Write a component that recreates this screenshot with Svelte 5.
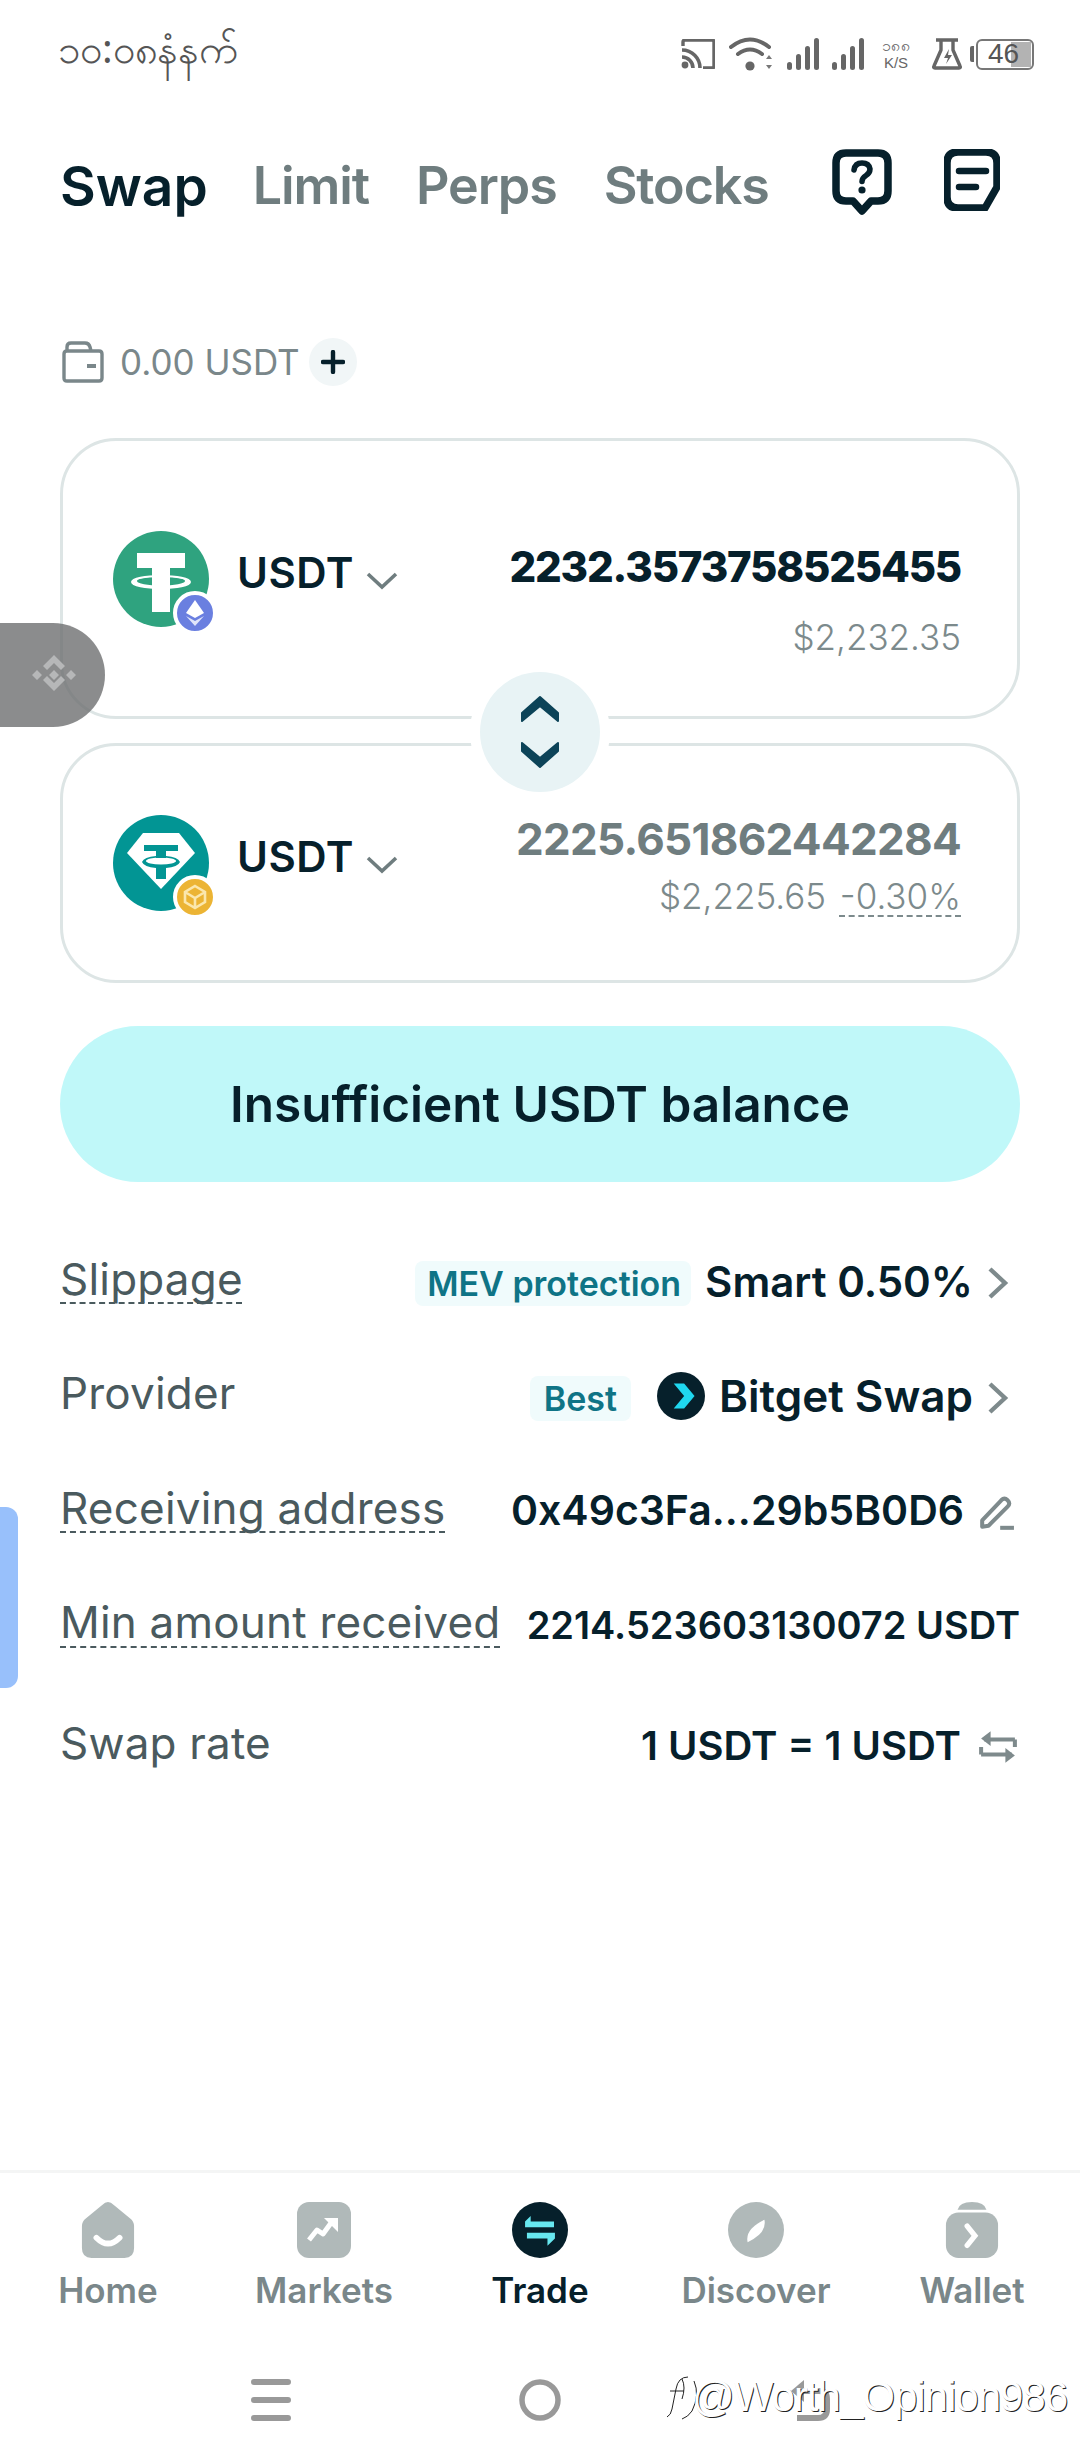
<script>
  const tabs = ['Limit', 'Perps', 'Stocks'];
  const nav = ['Home', 'Markets', 'Trade', 'Discover', 'Wallet'];
</script>

<div class="page">
  <div class="status">
    <span class="time">၁၀:၀၈နံနက်</span>
    <div class="sicons">
      <svg width="34" height="30" viewBox="0 0 34 30" class="cast"><path d="M2 7V3q0-2 2-2h27q2 0 2 2v24q0 2-2 2H22" fill="none" stroke="#666" stroke-width="3.4"/><circle cx="4" cy="26" r="3.4" fill="#666"/><path d="M1 18a11 11 0 0 1 11 11M1 11a18 18 0 0 1 18 18" fill="none" stroke="#666" stroke-width="3.6"/></svg>
      <svg width="44" height="34" viewBox="0 0 44 34" class="wifi"><path d="M2 10q19-15 38 0M9 17q12-9 24 0" fill="none" stroke="#666" stroke-width="4" stroke-linecap="round"/><circle cx="21" cy="29" r="4.6" fill="#666"/><path d="M37 22l3-4 3 4zM37 28l3 4 3-4z" fill="#777"/></svg>
      <svg width="32" height="32" viewBox="0 0 32 32" class="sig"><rect x="0" y="24" width="5" height="8" rx="2.5"/><rect x="9" y="16" width="5" height="16" rx="2.5"/><rect x="18" y="8" width="5" height="24" rx="2.5"/><rect x="27" y="0" width="5" height="32" rx="2.5"/></svg>
      <svg width="32" height="32" viewBox="0 0 32 32" class="sig two"><rect x="0" y="24" width="5" height="8" rx="2.5"/><rect x="9" y="16" width="5" height="16" rx="2.5"/><rect x="18" y="8" width="5" height="24" rx="2.5"/><rect x="27" y="0" width="5" height="32" rx="2.5"/></svg>
      <div class="speed"><span>၁၈၈</span><span class="ks">K/S</span></div>
      <svg width="30" height="32" viewBox="0 0 30 32" class="flask"><path d="M4 2h22M9 2v10L2 28q-1 2 1 2h24q2 0 1-2L21 12V2" fill="none" stroke="#666" stroke-width="3.4" stroke-linejoin="round"/><path d="M17 11l-5 9h4l-2 6 6-9h-4z" fill="#666"/></svg>
      <div class="battery"><span class="cap"></span><div class="cell"><span class="fill"></span><span class="pct">46</span></div></div>
    </div>
  </div>

  <div class="head">
    <div class="tabs">
      <span class="tab on">Swap</span>
      {#each tabs as t}<span class="tab">{t}</span>{/each}
    </div>
    <div class="hicons">
      <svg width="60" height="66" viewBox="0 0 60 66"><path d="M14 4h32q10 0 10 10v28q0 10-10 10h-7l-9 10-9-10h-7Q4 52 4 42V14Q4 4 14 4z" fill="none" stroke="#06202b" stroke-width="7.5" stroke-linejoin="round"/><path d="M22 21q1-7 8-7t8 6q0 4-4 6.500t-4 6" fill="none" stroke="#06202b" stroke-width="5.500" stroke-linecap="round"/><circle cx="30" cy="41" r="3.600" fill="#06202b"/></svg>
      <svg width="56" height="62" viewBox="0 0 56 62"><path d="M14 3h28q11 0 11 11v24L41 59H14Q3 59 3 48V14Q3 3 14 3z" fill="none" stroke="#06202b" stroke-width="7.5" stroke-linejoin="round"/><path d="M15 22h27M15 38h17" stroke="#06202b" stroke-width="6.500" stroke-linecap="round"/></svg>
    </div>
  </div>

  <div class="balance">
    <svg width="42" height="42" viewBox="0 0 42 42"><path d="M5 10V6q0-4 4-4h14q4 0 5 4l1 4M2 13q0-3 3-3h32q3 0 3 3v24q0 3-3 3H5q-3 0-3-3z" fill="none" stroke="#7a878a" stroke-width="3.400"/><rect x="25" y="23" width="9" height="4" fill="#7a878a"/></svg>
    <span>0.00 USDT</span>
    <span class="plus"><svg width="24" height="24" viewBox="0 0 24 24"><path d="M12 2v20M2 12h20" stroke="#06202b" stroke-width="4.400" stroke-linecap="round"/></svg></span>
  </div>

  <div class="swapbox">
    <div class="card first">
      <div class="token">
        <div class="logo">
          <svg width="96" height="96" viewBox="0 0 96 96"><circle cx="48" cy="48" r="48" fill="#2fa37f"/><path d="M24 22h48v15H57v8q17 1 20 6-3 5-20 6v24H39V57q-17-1-20-6 3-5 20-6v-8H24z" fill="#fff"/><ellipse cx="48" cy="50" rx="24" ry="4.500" fill="#2fa37f"/><rect x="39" y="46" width="18" height="9" fill="#fff"/><ellipse cx="48" cy="51" rx="29" ry="6" fill="none" stroke="#fff" stroke-width="2"/></svg>
          <span class="badge eth"><svg width="20" height="26" viewBox="0 0 20 26"><path d="M10 0l9 13-9 5-9-5z" fill="#fff"/><path d="M1 16l9 5 9-5-9 10z" fill="#dfe4fa"/></svg></span>
        </div>
        <span class="sym">USDT</span>
        <svg class="chev" width="32" height="20" viewBox="0 0 32 20"><path d="M2 3l14 13L30 3" fill="none" stroke="#6f7d7f" stroke-width="3.600"/></svg>
      </div>
      <div class="amts">
        <div class="amt dark">2232.3573758525455</div>
        <div class="usd">$2,232.35</div>
      </div>
    </div>
    <button class="flip" aria-label="flip">
      <svg width="44" height="76" viewBox="0 0 44 76"><path d="M4 27V19L22 3l18 16v8L22 12zM4 49v8l18 16 18-16v-8L22 64z" fill="#0c4358" stroke="#0c4358" stroke-width="2" stroke-linejoin="round"/></svg>
    </button>
    <div class="card second">
      <div class="token">
        <div class="logo">
          <svg width="96" height="96" viewBox="0 0 96 96"><circle cx="48" cy="48" r="48" fill="#029594"/><path d="M30 18h36l16 20-34 36L14 38z" fill="#fff"/><path d="M31 30h34v6H53v5q12 1 14 6-2 5-14 6v11H43V53q-12-1-14-6 2-5 14-6v-5H31z" fill="#029594"/><ellipse cx="48" cy="46" rx="15" ry="3.500" fill="#fff"/><rect x="43" y="38" width="10" height="5" fill="#029594"/></svg>
          <span class="badge bnb"><svg width="26" height="28" viewBox="0 0 26 28"><path d="M13 3l10 6v10l-10 6-10-6V9zM3 9l10 6 10-6M13 15v10" fill="none" stroke="#fbe7ad" stroke-width="2.600"/></svg></span>
        </div>
        <span class="sym">USDT</span>
        <svg class="chev" width="32" height="20" viewBox="0 0 32 20"><path d="M2 3l14 13L30 3" fill="none" stroke="#6f7d7f" stroke-width="3.600"/></svg>
      </div>
      <div class="amts tight">
        <div class="amt gray">2225.651862442284</div>
        <div class="usd">$2,225.65 <span class="dash">-0.30%</span></div>
      </div>
    </div>
  </div>

  <div class="cta">Insufficient USDT balance</div>

  <div class="rows">
    <div class="row">
      <span class="lab dash2">Slippage</span>
      <div class="val"><span class="tag mev">MEV protection</span><b class="smart">Smart 0.50%</b>
        <svg class="go" width="22" height="36" viewBox="0 0 22 36"><path d="M3 4l15 14L3 32" fill="none" stroke="#7e8a8c" stroke-width="4.400"/></svg></div>
    </div>
    <div class="row">
      <span class="lab">Provider</span>
      <div class="val"><span class="tag best">Best</span>
        <svg class="bit" width="48" height="48" viewBox="0 0 46 46"><circle cx="23" cy="23" r="23" fill="#06202b"/><path d="M16 11h10l10 12-10 12H16l10-12z" fill="#1fd7ef"/></svg>
        <b class="bitget">Bitget Swap</b>
        <svg class="go" width="22" height="36" viewBox="0 0 22 36"><path d="M3 4l15 14L3 32" fill="none" stroke="#7e8a8c" stroke-width="4.400"/></svg></div>
    </div>
    <div class="row">
      <span class="lab dash2">Receiving address</span>
      <div class="val"><b class="addr">0x49c3Fa...29b5B0D6</b>
        <svg class="edit" width="36" height="36" viewBox="0 0 34 34"><path d="M3 24L21 5q3-3 6 0t0 6L9 29l-6 1z" fill="none" stroke="#7e8a8c" stroke-width="3.800" stroke-linejoin="round"/><path d="M20 31h13" stroke="#7e8a8c" stroke-width="3.800"/></svg></div>
    </div>
    <div class="row">
      <span class="lab dash2">Min amount received</span>
      <div class="val"><b class="minv">2214.523603130072 USDT</b></div>
    </div>
    <div class="row">
      <span class="lab">Swap rate</span>
      <div class="val"><b>1 USDT = 1 USDT</b>
        <svg class="rate" width="38" height="38" viewBox="0 0 36 36"><path d="M34 11H5M34 11v7M2 25h29M2 25v-7" fill="none" stroke="#7e8a8c" stroke-width="3.800" stroke-linejoin="round"/><path d="M11 3v14L2 10zM25 19v14l9-7z" fill="#7e8a8c"/></svg></div>
    </div>
  </div>

  <div class="spacer"></div>

  <nav class="nav">
    {#each nav as n, i}
      <div class="item" class:active={i === 2}>
        {#if i === 0}
          <svg width="54" height="58" viewBox="0 0 54 58"><path d="M27 0q3 0 6 3l17 14q4 3 4 8v23q0 10-10 10H10Q0 58 0 48V25q0-5 4-8L21 3q3-3 6-3z" fill="#b0b9b9"/><path d="M15 37q12 12 24 0" fill="none" stroke="#fff" stroke-width="6" stroke-linecap="round"/></svg>
        {:else if i === 1}
          <svg width="54" height="56" viewBox="0 0 54 56"><rect width="54" height="56" rx="12" fill="#b0b9b9"/><path d="M12 38l8-10 6 4 8-11" fill="none" stroke="#fff" stroke-width="5" stroke-linejoin="round"/><path d="M27 16h14v14z" fill="#fff"/></svg>
        {:else if i === 2}
          <svg width="60" height="60" viewBox="0 0 60 60"><circle cx="30" cy="30" r="30" fill="#06202b"/><path d="M22 15v6h25v6H16v-6z" fill="#67e8f0" transform="translate(-2 0)"/><path d="M16 33h30v6l-8 8v-8H16z" fill="#67e8f0"/></svg>
        {:else if i === 3}
          <svg width="60" height="60" viewBox="0 0 60 60"><circle cx="30" cy="30" r="30" fill="#b0b9b9"/><path d="M21 43q-3-14 18-24 3 14-18 24z" fill="#fff"/></svg>
        {:else}
          <svg width="54" height="58" viewBox="0 0 54 58"><path d="M12 8Q14 0 27 0t15 8z" fill="#b0b9b9"/><rect y="11" width="54" height="47" rx="13" fill="#b0b9b9"/><path d="M22 25l8 10-8 10" fill="none" stroke="#fff" stroke-width="5.500" stroke-linecap="round"/></svg>
        {/if}
        <span>{n}</span>
      </div>
    {/each}
  </nav>

  <div class="sysbar">
    <svg width="40" height="42" viewBox="0 0 40 42"><path d="M3 3h34M3 21h34M3 39h34" stroke="#999" stroke-width="6" stroke-linecap="round"/></svg>
    <svg width="42" height="42" viewBox="0 0 42 42"><circle cx="21" cy="21" r="18" fill="none" stroke="#999" stroke-width="5.500"/></svg>
    <svg width="42" height="42" viewBox="0 0 42 42"><path d="M6 12h24q8 0 8 8v10q0 9-9 9H8" fill="none" stroke="#999" stroke-width="6"/><path d="M15 1v22L2 12z" fill="#999"/></svg>
  </div>

  <div class="pill"><svg width="44" height="42" viewBox="0 0 44 42"><path d="M22 1l11 11-4 4-7-7-7 7-4-4zM5 16l5 5-5 5-5-5zM39 16l5 5-5 5-5-5zM22 16l5 5-5 5-5-5zM11 26l4-4 7 7 7-7 4 4-11 11z" fill="#b6b7b8"/></svg></div>
  <div class="bluetab"></div>
  <div class="mark">
    <svg class="zh" width="36" height="50" viewBox="0 0 36 50"><path d="M22 4Q12 4 10 16L6 36q-1 6-5 8M4 18h14M16 6q4 8 0 20M28 8q6 14-2 30-4 6-10 8" fill="none" stroke="#fff" stroke-width="3"/><path d="M23 5Q13 5 11 17L7 37q-1 6-5 8M5 19h14M17 7q4 8 0 20M29 9q6 14-2 30-4 6-10 8" fill="none" stroke="#222" stroke-width="1"/></svg>
    <span>@Worth_Opinion986</span>
  </div>
</div>

<style>
  :global(body) { margin: 0; background: #fff; }
  .page { position: relative; width: 1080px; height: 2460px; display: flex; flex-direction: column; background: #fff; overflow: hidden; font-family: Inter, "Noto Sans", sans-serif; color: #06202b; }

  .status { height: 100px; box-sizing: border-box; padding: 22px 46px 0 58px; display: flex; justify-content: space-between; align-items: flex-start; }
  .time { font-size: 40px; color: #555; line-height: 52px; font-family: "Noto Sans", "DejaVu Sans", sans-serif; }
  .sicons { display: flex; align-items: center; height: 50px; margin-top: 7px; }
  .cast { margin-right: 14px; }
  .wifi { margin-right: 14px; }
  .sig { fill: #666; margin-right: 13px; }
  .sig.two { margin-right: 13px; }
  .speed { display: flex; flex-direction: column; align-items: center; width: 38px; font-size: 16px; line-height: 17px; color: #666; margin-right: 17px; font-family: "Noto Sans", sans-serif; }
  .ks { font-family: "Liberation Sans", sans-serif; font-size: 15px; }
  .flask { margin-right: 8px; }
  .battery { display: flex; align-items: center; }
  .cap { width: 4px; height: 16px; background: #666; border-radius: 2px 0 0 2px; margin-right: 2px; }
  .cell { position: relative; width: 58px; height: 31px; box-sizing: border-box; border: 2.5px solid #777; border-radius: 6px; display: flex; align-items: center; justify-content: center; }
  .fill { position: absolute; right: 1px; top: 1px; bottom: 1px; width: 20px; background: #b3b3b3; }
  .pct { position: relative; font: 28px "Liberation Sans", sans-serif; color: #555; margin-right: 3px; }

  .head { display: flex; justify-content: space-between; align-items: flex-start; height: 224px; box-sizing: border-box; padding: 49px 80px 0 60px; }
  .tabs { display: flex; gap: 47px; }
  .tab { font-size: 52px; line-height: 74px; font-weight: 600; color: #6f7d7f; letter-spacing: -1.1px; }
  .tab.on { color: #06202b; font-size: 55px; letter-spacing: 0; margin-right: -2px; }
  .hicons { display: flex; gap: 52px; padding-top: 0; }

  .balance { display: flex; align-items: center; height: 48px; padding-left: 62px; font-size: 35px; color: #7a878a; margin-top: 14px; }
  .balance span:first-of-type { margin-left: 16px; }
  .plus { width: 48px; height: 48px; border-radius: 50%; background: #f1f6f7; margin-left: 9px; display: flex; align-items: center; justify-content: center; }

  .swapbox { position: relative; margin: 52px 60px 0; display: flex; flex-direction: column; gap: 24px; }
  .card { border: 3px solid #dde5e5; border-radius: 56px; box-sizing: border-box; display: flex; justify-content: space-between; padding: 0 56px 0 50px; }
  .first { height: 281px; padding-top: 88px; }
  .second { height: 240px; padding-top: 66px; }
  .token { display: flex; align-items: flex-start; margin-top: 2px; }
  .second .token { margin-top: 3px; }
  .logo { position: relative; width: 96px; height: 96px; margin-right: 28px; }
  .badge { position: absolute; right: -8px; bottom: -8px; width: 36px; height: 36px; border: 4px solid #fff; border-radius: 50%; display: flex; align-items: center; justify-content: center; }
  .eth { background: #6a7fe0; }
  .bnb { background: #ecb434; }
  .sym { font-size: 42px; font-weight: 600; line-height: 50px; margin-top: 17px; letter-spacing: 0.5px; }
  .chev { margin: 40px 0 0 12px; }
  .amts { text-align: right; }
  .amt { font-size: 42px; line-height: 50px; font-weight: 800; letter-spacing: -1.2px; }
  .amt.dark { margin-top: 13px; }
  .amt.gray { font-size: 44px; font-weight: 700; color: #6f7d7f; margin-top: 2px; letter-spacing: -0.7px; }
  .usd { font-size: 35px; line-height: 46px; color: #7c8a8c; font-weight: 300; margin-top: 22px; }
  .tight .usd { margin-top: 9px; }
  .dash { text-decoration: underline dashed 2px; text-underline-offset: 6px; text-decoration-skip-ink: none; margin-left: 4px; }

  .flip { position: absolute; left: 420px; top: 234px; width: 120px; height: 120px; box-sizing: border-box; padding: 0; border: 0; border-radius: 50%; background: #e8f3f5; box-shadow: 0 0 0 10px #fff; display: flex; align-items: center; justify-content: center; }

  .cta { margin: 43px 60px 0; height: 156px; border-radius: 78px; background: #c0f8f9; display: flex; align-items: center; justify-content: center; font-size: 49.500px; font-weight: 600; }

  .rows { display: flex; flex-direction: column; gap: 0; margin-top: 42px; padding: 0 60px; }
  .row { height: 114.500px; display: flex; justify-content: space-between; align-items: center; }
  .row:last-child { margin-top: 6px; }
  .lab { font-size: 44px; line-height: 50px; color: #4a5a5e; margin-top: -5px; white-space: nowrap; letter-spacing: 0.2px; }
  .dash2 { text-decoration: underline dashed 2px; text-underline-offset: 8px; text-decoration-skip-ink: none; }
  .val { display: flex; align-items: center; font-size: 40px; white-space: nowrap; }
  .val b { font-weight: 600; }
  .smart { font-size: 42px; }
  .bitget { font-size: 44px; }
  .addr { font-size: 41px; }
  .minv { font-size: 38px; }
  .tag { font-size: 34px; font-weight: 600; color: #0f7486; background: #f0fbfc; border-radius: 8px; padding: 2px 10px 2px 12px; margin: 5px 14px 0 0; }
  .best { padding: 2px 14px; margin: 5px 26px 0 0; }
  .bit { margin-right: 14px; }
  .go { margin: 4px 11px 0 14px; }
  .edit { margin: 6px 5px 0 15px; }
  .rate { margin: 4px 3px 0 18px; }

  .spacer { flex: 1; }

  .nav { height: 178px; border-top: 3px solid #f4f5f5; box-sizing: border-box; display: flex; padding-top: 29px; flex-shrink: 0; }
  .item { flex: 1; display: flex; flex-direction: column; align-items: center; height: 110px; }
  .item svg { height: 60px; }
  .item span { font-size: 35px; font-weight: 600; color: #7a878a; line-height: 44px; margin-top: 10px; }
  .item.active span { color: #06202b; }

  .sysbar { height: 112px; box-sizing: border-box; padding: 31px 0 0 251px; display: flex; gap: 228px; flex-shrink: 0; align-items: flex-start; }

  .pill { position: absolute; left: 0; top: 623px; width: 105px; height: 104px; background: rgba(110, 111, 112, 0.8); border-radius: 0 52px 52px 0; display: flex; align-items: center; padding-left: 32px; box-sizing: border-box; }
  .bluetab { position: absolute; left: 0; top: 1507px; width: 18px; height: 181px; background: #98c0fb; border-radius: 0 12px 12px 0; }
  .mark { position: absolute; left: 665px; top: 2372px; display: flex; align-items: center; font: 42px "Liberation Sans", sans-serif; letter-spacing: -1px; color: #fff; text-shadow: 1px 1px 0 #222; white-space: nowrap; }
  .zh { margin-right: -9px; }
</style>
